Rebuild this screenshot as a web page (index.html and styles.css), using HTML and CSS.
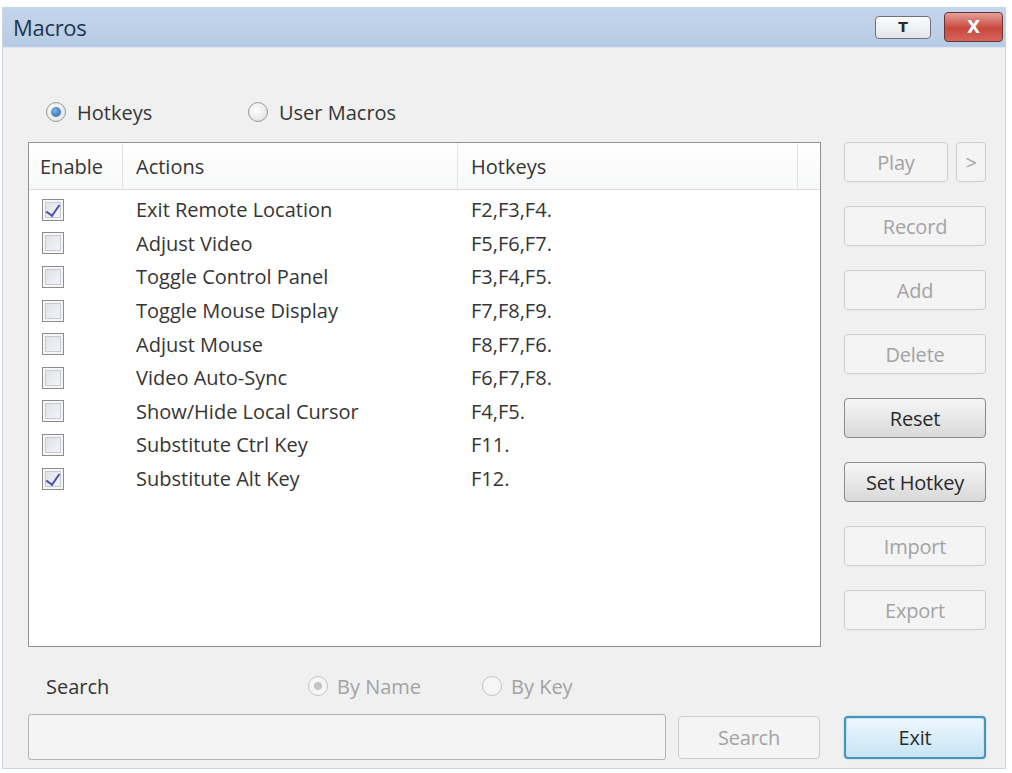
FILE: index.html
```html
<!DOCTYPE html>
<html lang="en">
<head>
    <meta charset="UTF-8">
    <title>Macros</title>
    <link rel="stylesheet" href="styles.css">
</head>
<body>

<div class="window">
    <div class="titlebar">
        <span class="title">Macros</span>
        <div class="caption-btns">
            <button class="cap-btn pin">T</button>
            <button class="cap-btn close">X</button>
        </div>
    </div>

    <div class="body">
        <!-- mode -->
        <div class="mode-row">
            <label class="radio-opt first"><span class="radio on"></span>Hotkeys</label>
            <label class="radio-opt"><span class="radio"></span>User Macros</label>
        </div>

        <div class="main">
            <div class="list">
                <div class="list-head">
                    <div class="col c-enable">Enable</div>
                    <div class="col c-action">Actions</div>
                    <div class="col c-keys">Hotkeys</div>
                    <div class="col c-fill"></div>
                </div>
                <div class="list-body">
                    <div class="row"><span class="chk on"></span><span class="act">Exit Remote Location</span><span class="keys">F2,F3,F4.</span></div>
                    <div class="row"><span class="chk"></span><span class="act">Adjust Video</span><span class="keys">F5,F6,F7.</span></div>
                    <div class="row"><span class="chk"></span><span class="act">Toggle Control Panel</span><span class="keys">F3,F4,F5.</span></div>
                    <div class="row"><span class="chk"></span><span class="act">Toggle Mouse Display</span><span class="keys">F7,F8,F9.</span></div>
                    <div class="row"><span class="chk"></span><span class="act">Adjust Mouse</span><span class="keys">F8,F7,F6.</span></div>
                    <div class="row"><span class="chk"></span><span class="act">Video Auto-Sync</span><span class="keys">F6,F7,F8.</span></div>
                    <div class="row"><span class="chk"></span><span class="act">Show/Hide Local Cursor</span><span class="keys">F4,F5.</span></div>
                    <div class="row"><span class="chk"></span><span class="act">Substitute Ctrl Key</span><span class="keys">F11.</span></div>
                    <div class="row"><span class="chk on"></span><span class="act">Substitute Alt Key</span><span class="keys">F12.</span></div>
                </div>
            </div>

            <div class="side">
                <div class="play-row">
                    <button class="btn off play">Play</button>
                    <button class="btn off more">&gt;</button>
                </div>
                <button class="btn off">Record</button>
                <button class="btn off">Add</button>
                <button class="btn off">Delete</button>
                <button class="btn">Reset</button>
                <button class="btn">Set Hotkey</button>
                <button class="btn off">Import</button>
                <button class="btn off">Export</button>
            </div>
        </div>

        <div class="search-row">
            <span class="search-label">Search</span>
            <label class="radio-opt dim by-name"><span class="radio dot"></span>By Name</label>
            <label class="radio-opt dim"><span class="radio"></span>By Key</label>
        </div>

        <div class="bottom-row">
            <input type="text" class="search-box">
            <button class="btn off search-btn">Search</button>
            <button class="btn exit">Exit</button>
        </div>
    </div>
</div>

</body>
</html>
```

FILE: styles.css
```css
body {
    margin: 0;
    background: #ffffff;
    font-family: "Open Sans", "Noto Sans", sans-serif;
    font-size: 20px;
    color: #353535;
}
.window {
    width: 1002px;
    margin: 7px 0 0 2px;
    border: 1px solid #c9d4e0;
    border-top: none;
    background: #f0f0f0;
}
.titlebar {
    height: 40px;
    display: flex;
    align-items: center;
    justify-content: space-between;
    background: linear-gradient(#c4d6ec, #b7cbe4);
    border-bottom: 1px solid #dfe7f1;
    padding: 0 2px 0 10px;
}
.title {
    font-size: 22px;
    color: #1f3550;
    letter-spacing: -0.3px;
}
.caption-btns {
    display: flex;
    gap: 13px;
    align-items: center;
}
.cap-btn {
    font-family: "DejaVu Sans", sans-serif;
    font-weight: bold;
    border-radius: 4px;
    padding: 0;
    cursor: pointer;
}
.pin {
    width: 56px;
    height: 23px;
    font-size: 14px;
    color: #2a2a2a;
    border: 1px solid #6c7480;
    background: linear-gradient(#fbfbfb, #e3e6ea);
}
.close {
    width: 59px;
    height: 30px;
    font-size: 17px;
    color: #ffffff;
    border: 1px solid #6a3434;
    background: linear-gradient(#e3a199, #c9473d 55%, #d6675c);
}

.body {
    padding: 52px 0 8px 25px;
}
.mode-row {
    display: flex;
    align-items: center;
    height: 24px;
    padding-left: 18px;
}
.radio-opt {
    display: flex;
    align-items: center;
    gap: 11px;
}
.radio-opt.first {
    width: 202px;
}
.radio {
    width: 20px;
    height: 20px;
    border-radius: 50%;
    border: 1px solid #9a9a9a;
    background: radial-gradient(circle at 40% 40%, #ffffff, #dcdcdc);
    box-sizing: border-box;
    position: relative;
}
.radio.on::after {
    content: "";
    position: absolute;
    left: 4px;
    top: 4px;
    width: 10px;
    height: 10px;
    border-radius: 50%;
    background: radial-gradient(circle at 40% 35%, #7fb4e6, #1e5d9e);
}

.main {
    display: flex;
    gap: 23px;
    margin-top: 18px;
}
.list {
    width: 791px;
    height: 503px;
    border: 1px solid #8e9298;
    background: #ffffff;
}
.list-head {
    display: flex;
    height: 46px;
    border-bottom: 1px solid #dcdcdc;
    background: linear-gradient(#ffffff, #f7f8f9);
}
.col {
    display: flex;
    align-items: center;
    border-right: 1px solid #e3e3e3;
    padding-left: 11px;
    box-sizing: border-box;
}
.c-enable { width: 94px; }
.c-action { width: 335px; padding-left: 13px; }
.c-keys { width: 340px; padding-left: 13px; }
.c-fill { flex: 1; border-right: none; }

.list-body {
    padding-top: 3px;
}
.row {
    display: flex;
    align-items: center;
    height: 33.6px;
}
.chk {
    width: 22px;
    height: 22px;
    margin-left: 13px;
    box-sizing: border-box;
    border: 1px solid #8c8c8c;
    box-shadow: inset 0 0 0 2px #f6f6f6, inset 0 0 0 3px #c6c9d0;
    background: linear-gradient(135deg, #dcdfe6, #f6f7f9);
    position: relative;
}
.chk.on::after {
    content: "";
    position: absolute;
    left: 6px;
    top: 2px;
    width: 6px;
    height: 12px;
    border: solid #4b4fa8;
    border-width: 0 2px 2px 0;
    transform: rotate(35deg);
}
.act {
    width: 335px;
    margin-left: 72px;
}

.side {
    width: 142px;
    display: flex;
    flex-direction: column;
    gap: 24px;
}
.play-row {
    display: flex;
    gap: 8px;
}
.btn {
    height: 40px;
    border-radius: 4px;
    border: 1px solid #8a8a8a;
    background: linear-gradient(#f6f6f6, #e8e8e8 50%, #d8d8d8);
    font-family: inherit;
    font-size: 20px;
    color: #2a2a2a;
    letter-spacing: -0.2px;
    padding: 0;
    cursor: pointer;
}
.btn.off {
    border-color: #cdcdcd;
    background: #f4f4f4;
    color: #a3a3a3;
}
.play { width: 104px; }
.more { width: 30px; }

.search-row {
    display: flex;
    align-items: center;
    height: 24px;
    margin-top: 27px;
    padding-left: 18px;
}
.search-label {
    width: 262px;
}
.radio-opt.dim {
    color: #a3a3a3;
    gap: 9px;
}
.radio-opt.by-name {
    width: 174px;
}
.radio-opt.dim .radio {
    border-color: #c4c4c4;
    background: #f6f6f6;
}
.radio.dot::after {
    content: "";
    position: absolute;
    left: 5px;
    top: 5px;
    width: 8px;
    height: 8px;
    border-radius: 50%;
    background: #c4c4c4;
}

.bottom-row {
    display: flex;
    align-items: center;
    margin-top: 16px;
}
.search-box {
    width: 638px;
    height: 46px;
    box-sizing: border-box;
    border: 1px solid #b4b4b4;
    border-radius: 3px;
    background: #f4f4f4;
}
.search-btn {
    width: 142px;
    height: 43px;
    margin-left: 12px;
}
.exit {
    width: 142px;
    height: 43px;
    margin-left: 24px;
    border: 2px solid #4a92b8;
    box-shadow: inset 0 0 0 1px #bfe6f8, 0 0 2px #9ccbe6;
    background: linear-gradient(#eef8fd, #d9eef9 50%, #c8e4f4);
}
```
